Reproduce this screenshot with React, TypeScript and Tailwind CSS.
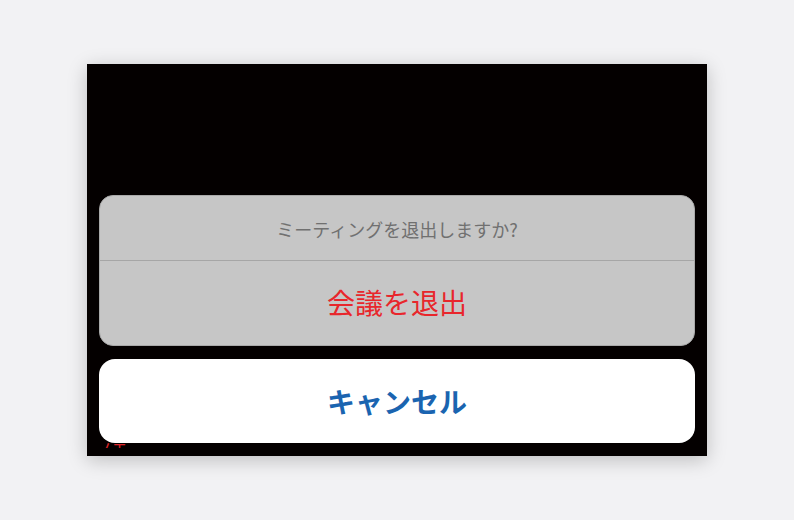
export default function App() {
  return (
    <div className="flex h-[520px] w-[794px] items-start justify-center bg-[#f2f2f4] pt-[64px] font-['Noto_Sans_CJK_JP',sans-serif]">
      <div className="relative flex h-[392px] w-[620px] flex-col justify-end gap-[13px] bg-[#040000] px-[12px] pb-[13px] shadow-[0_4px_18px_rgba(0,0,0,0.22)]">
        {/* text partly hidden behind the cancel button */}
        <div className="absolute left-[10px] top-[376px] h-[8px] overflow-hidden">
          <span className="block text-[15px] leading-none text-[#e0262b]">ノエ</span>
        </div>
        <div className="flex h-[151px] flex-col overflow-hidden rounded-[14px] border border-[#a9a9a9] bg-[#c6c6c6]">
          <div className="flex h-[65px] items-center justify-center border-b border-[#a6a6a6] pt-[2px] text-[18px] text-[#707070]">
            ミーティングを退出しますか?
          </div>
          <div className="flex flex-1 items-center justify-center pb-[2px] text-[28px] text-[#e8262c]">
            会議を退出
          </div>
        </div>
        <div className="relative z-10 flex h-[84px] items-center justify-center rounded-[16px] bg-white text-[28px] font-bold text-[#1a64b0]">
          キャンセル
        </div>
      </div>
    </div>
  );
}
